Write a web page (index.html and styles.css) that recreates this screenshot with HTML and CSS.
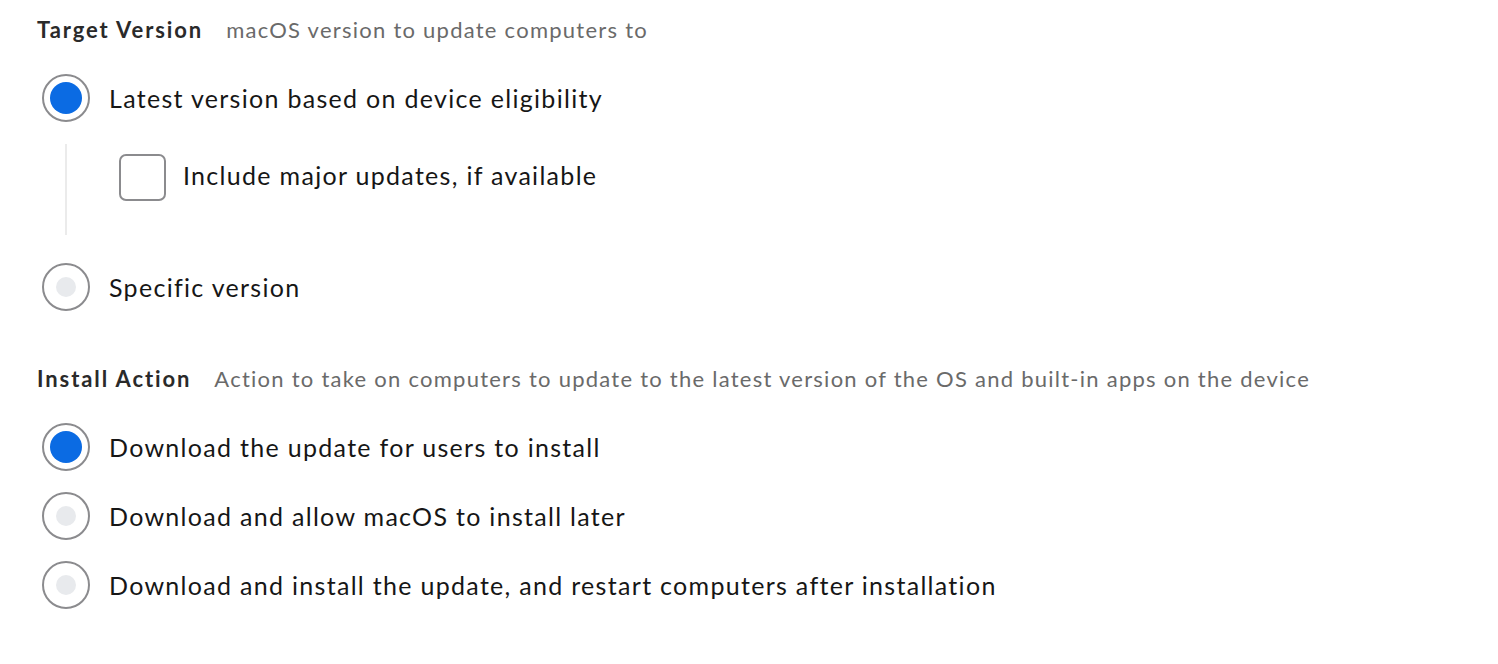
FILE: index.html
```html
<!DOCTYPE html>
<html lang="en">
<head>
<meta charset="utf-8">
<title>Software update settings</title>
<link rel="stylesheet" href="styles.css">
</head>
<body>
<main class="form">
  <section class="section">
    <div class="heading">
      <span class="heading-title">Target Version</span>
      <span class="heading-desc">macOS version to update computers to</span>
    </div>
    <div class="options">
      <label class="option">
        <span class="radio radio-on"><span class="radio-dot"></span></span>
        <span class="option-label">Latest version based on device eligibility</span>
      </label>
      <div class="nested">
        <label class="check-option">
          <span class="checkbox"></span>
          <span class="option-label">Include major updates, if available</span>
        </label>
      </div>
      <label class="option option-after-nested">
        <span class="radio"><span class="radio-dot"></span></span>
        <span class="option-label">Specific version</span>
      </label>
    </div>
  </section>
  <section class="section section-second">
    <div class="heading">
      <span class="heading-title">Install Action</span>
      <span class="heading-desc">Action to take on computers to update to the latest version of the OS and built-in apps on the device</span>
    </div>
    <div class="options options-list">
      <label class="option">
        <span class="radio radio-on"><span class="radio-dot"></span></span>
        <span class="option-label">Download the update for users to install</span>
      </label>
      <label class="option">
        <span class="radio"><span class="radio-dot"></span></span>
        <span class="option-label">Download and allow macOS to install later</span>
      </label>
      <label class="option">
        <span class="radio"><span class="radio-dot"></span></span>
        <span class="option-label">Download and install the update, and restart computers after installation</span>
      </label>
    </div>
  </section>
</main>
</body>
</html>
```
FILE: styles.css
```css
html, body {
  margin: 0;
  padding: 0;
  background: #ffffff;
}

body {
  font-family: Lato, "Noto Sans", sans-serif;
  color: #1b1b1b;
}

.form {
  display: flex;
  flex-direction: column;
  padding: 16px 0 0 37px;
}

.section {
  display: flex;
  flex-direction: column;
}

.section-second {
  margin-top: 54px;
}

.heading {
  display: flex;
  align-items: baseline;
  gap: 23px;
  font-size: 22px;
  line-height: 28px;
  margin-bottom: 30px;
}

.heading-title {
  font-weight: 700;
  color: #2a2a2a;
  letter-spacing: 1.9px;
}

.heading-desc {
  color: #6a6a6a;
  letter-spacing: 1.25px;
}

.options {
  display: flex;
  flex-direction: column;
  padding-left: 5px;
}

.options-list {
  gap: 21px;
}

.option {
  display: flex;
  align-items: center;
  gap: 19px;
  height: 48px;
}

.option-after-nested {
  margin-top: 28px;
}

.option-label {
  font-size: 25px;
  line-height: 48px;
  color: #161616;
  letter-spacing: 1.3px;
}

.radio {
  box-sizing: border-box;
  width: 48px;
  height: 48px;
  border: 2px solid #8b8b8e;
  border-radius: 50%;
  display: flex;
  align-items: center;
  justify-content: center;
  flex-shrink: 0;
}

.radio-dot {
  width: 20px;
  height: 20px;
  border-radius: 50%;
  background: #e8eaed;
}

.radio-on .radio-dot {
  width: 32px;
  height: 32px;
  background: #0b6be3;
}

.nested {
  margin: 22px 0 0 23px;
  border-left: 2px solid #ebebeb;
  padding: 10px 0 34px 52px;
}

.check-option {
  display: flex;
  align-items: flex-start;
  gap: 17px;
  height: 47px;
}

.checkbox {
  box-sizing: border-box;
  width: 47px;
  height: 47px;
  border: 2px solid #8b8b8e;
  border-radius: 7px;
  flex-shrink: 0;
}

.check-option .option-label {
  line-height: 42px;
}
```
